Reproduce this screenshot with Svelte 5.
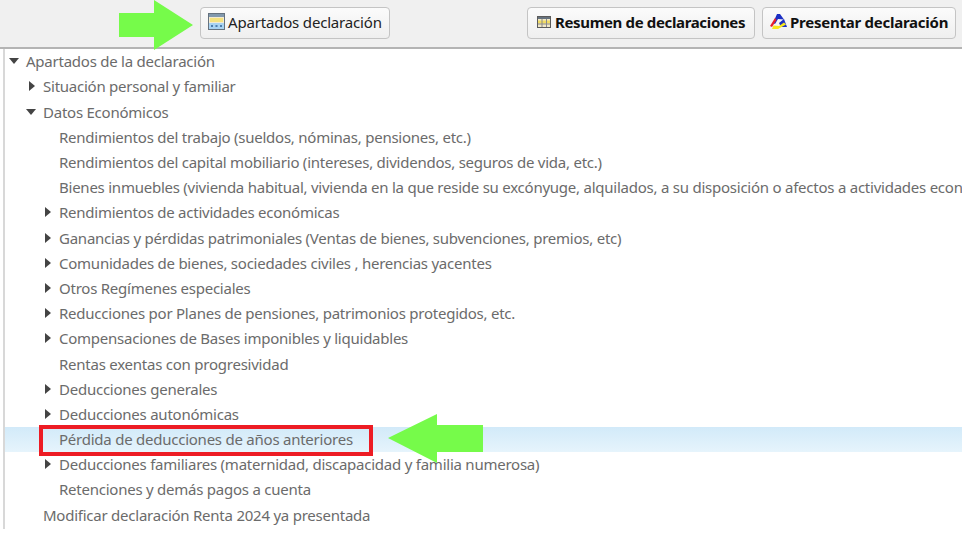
<script lang="ts">
  type Row = { label: string; level: number; arrow?: 'open' | 'closed'; selected?: boolean };

  const rows: Row[] = [
    { label: 'Apartados de la declaración', level: 0, arrow: 'open' },
    { label: 'Situación personal y familiar', level: 1, arrow: 'closed' },
    { label: 'Datos Económicos', level: 1, arrow: 'open' },
    { label: 'Rendimientos del trabajo (sueldos, nóminas, pensiones, etc.)', level: 2 },
    { label: 'Rendimientos del capital mobiliario (intereses, dividendos, seguros de vida, etc.)', level: 2 },
    { label: 'Bienes inmuebles (vivienda habitual, vivienda en la que reside su excónyuge, alquilados, a su disposición o afectos a actividades económicas)', level: 2 },
    { label: 'Rendimientos de actividades económicas', level: 2, arrow: 'closed' },
    { label: 'Ganancias y pérdidas patrimoniales (Ventas de bienes, subvenciones, premios, etc)', level: 2, arrow: 'closed' },
    { label: 'Comunidades de bienes, sociedades civiles , herencias yacentes', level: 2, arrow: 'closed' },
    { label: 'Otros Regímenes especiales', level: 2, arrow: 'closed' },
    { label: 'Reducciones por Planes de pensiones, patrimonios protegidos, etc.', level: 2, arrow: 'closed' },
    { label: 'Compensaciones de Bases imponibles y liquidables', level: 2, arrow: 'closed' },
    { label: 'Rentas exentas con progresividad', level: 2 },
    { label: 'Deducciones generales', level: 2, arrow: 'closed' },
    { label: 'Deducciones autonómicas', level: 2, arrow: 'closed' },
    { label: 'Pérdida de deducciones de años anteriores', level: 2, selected: true },
    { label: 'Deducciones familiares (maternidad, discapacidad y familia numerosa)', level: 2, arrow: 'closed' },
    { label: 'Retenciones y demás pagos a cuenta', level: 2 },
    { label: 'Modificar declaración Renta 2024 ya presentada', level: 1 },
  ];
</script>

<div class="page">
  <header class="toolbar">
    <svg class="green-arrow right" width="76" height="50" viewBox="0 0 76 50" aria-hidden="true">
      <path d="M0 13H35V0L74 25L35 50V37H0Z" fill="#76fb4a" />
    </svg>
    <button type="button" class="btn first">
      <svg width="17" height="17" viewBox="0 0 17 17" aria-hidden="true">
        <rect x="0.5" y="0.5" width="16" height="16" fill="#f3ead0" stroke="#66727e" />
        <rect x="1" y="1" width="15" height="3" fill="#8299ad" />
        <rect x="2" y="5" width="13" height="4" fill="#f5e27e" />
        <rect x="1" y="10" width="15" height="6" fill="#a9d3f2" />
        <path d="M3 13h2M7.500 13h2M12 13h2" stroke="#4f7fae" stroke-width="2" />
      </svg>
      Apartados declaración
    </button>
    <button type="button" class="btn strong">
      <svg width="14" height="12" viewBox="0 0 14 12" aria-hidden="true">
        <rect x="0.5" y="0.5" width="13" height="11" fill="#f2e9c8" stroke="#5b5b5b" />
        <rect x="1" y="1" width="12" height="2" fill="#67727e" />
        <rect x="1" y="4.500" width="12" height="3" fill="#f2dc63" />
        <path d="M5 3v8M9.500 3v8M1 8h12" stroke="#8a8a8a" />
      </svg>
      Resumen de declaraciones
    </button>
    <button type="button" class="btn strong last">
      <svg width="17" height="15" viewBox="0 0 17 15" aria-hidden="true">
        <path d="M3 9L7 0H10L14 5.500L8 5L5 10Z" fill="#1c2fc4" />
        <path d="M9 9L14 5L17 13H11Z" fill="#1c2fc4" />
        <path d="M2 15L3.500 11.500L9 12L14 8.500L16 10.500L8 15Z" fill="#f8e81c" />
        <path d="M0 12L5 4L6.500 6L2 13Z" fill="#e8202a" />
      </svg>
      Presentar declaración
    </button>
  </header>

  <ul class="tree">
    {#each rows as row}
      <li class="row level-{row.level}" class:selected={row.selected}>
        {#if row.arrow}
          <span class="arrow {row.arrow}"></span>
        {/if}
        <span class="label">{row.label}</span>
      </li>
    {/each}
  </ul>

  <svg class="green-arrow left" width="96" height="50" viewBox="0 0 96 50" aria-hidden="true">
    <path d="M95 12H49V1L0 25L49 50V39H95Z" fill="#76fb4a" />
  </svg>
</div>

<style>
  :global(body) {
    margin: 0;
    background: #fff;
  }

  .page {
    position: relative;
    width: 962px;
    height: 537px;
    overflow: hidden;
    font-family: "Noto Sans", sans-serif;
  }

  .toolbar {
    display: flex;
    align-items: flex-start;
    box-sizing: border-box;
    height: 49px;
    padding: 7px 6px 0 200px;
    background: #f0f0f0;
    border-bottom: 2px solid #b4b4b4;
  }

  .btn {
    display: flex;
    align-items: center;
    gap: 3px;
    box-sizing: border-box;
    height: 32px;
    padding: 0 0 3px 7px;
    border: 1px solid #c4c4c4;
    border-radius: 4px;
    background: linear-gradient(#fbfbfb, #efefef);
    color: #222;
    font: inherit;
    font-size: 15px;
    letter-spacing: -0.180px;
    white-space: nowrap;
  }

  .first {
    width: 190px;
    margin-right: auto;
  }

  .strong {
    width: 228px;
    gap: 4px;
    padding-left: 9px;
    font-weight: 700;
    letter-spacing: -0.350px;
    color: #111;
  }

  .last {
    width: 194px;
    gap: 3px;
    padding-left: 7px;
    margin-left: 7px;
    letter-spacing: -0.250px;
  }

  .green-arrow {
    position: absolute;
  }

  .green-arrow.right {
    left: 119px;
    top: 0;
  }

  .green-arrow.left {
    left: 388px;
    top: 413px;
  }

  .tree {
    box-sizing: border-box;
    height: 480px;
    margin: 0 0 0 3px;
    padding: 0.300px 0 0;
    border-left: 2px solid #d8d8d8;
    list-style: none;
    overflow: hidden;
  }

  .row {
    position: relative;
    height: 25.200px;
    line-height: 25.200px;
    color: #6b6b6b;
    font-size: 15px;
    letter-spacing: -0.240px;
    white-space: nowrap;
  }

  .level-0 { padding-left: 21px; }
  .level-1 { padding-left: 38px; }
  .level-2 { padding-left: 54px; }

  .selected {
    background: linear-gradient(#d2eaf9, #e6f4fc);
  }

  .selected::before {
    content: '';
    position: absolute;
    left: 34px;
    top: -2px;
    width: 334px;
    height: 31px;
    box-sizing: border-box;
    border: 4px solid #ed1c24;
  }

  .label {
    position: relative;
  }

  .arrow {
    position: absolute;
    width: 0;
    height: 0;
  }

  .arrow.open {
    top: 9px;
    margin-left: -17px;
    border-left: 5px solid transparent;
    border-right: 5px solid transparent;
    border-top: 6px solid #444;
  }

  .arrow.closed {
    top: 7px;
    margin-left: -14px;
    border-top: 5px solid transparent;
    border-bottom: 5px solid transparent;
    border-left: 6px solid #444;
  }
</style>
